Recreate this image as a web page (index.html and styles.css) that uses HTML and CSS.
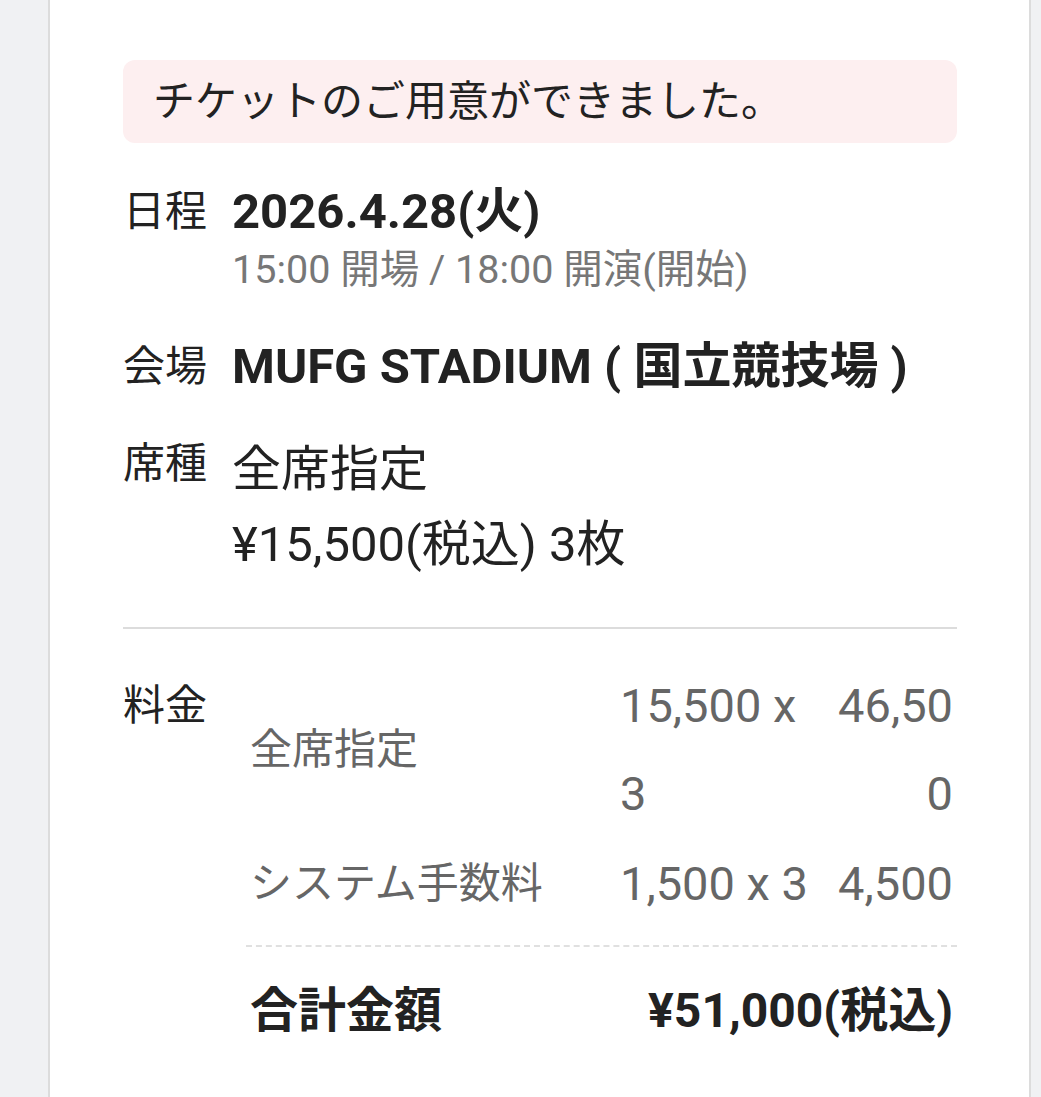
FILE: index.html
```html
<!DOCTYPE html>
<html lang="ja">
<head>
    <meta charset="UTF-8">
    <meta name="viewport" content="width=device-width, initial-scale=1.0">
    <title>チケット</title>
    <link rel="stylesheet" href="styles.css">
</head>
<body>
    <div class="card">
        <!-- お知らせ -->
        <div class="notice">チケットのご用意ができました。</div>

        <!-- 公演情報 -->
        <dl class="info">
            <div class="info-row">
                <dt>日程</dt>
                <dd>
                    <div class="date">2026.4.28(火)</div>
                    <div class="time">15:00 開場 / 18:00 開演(開始)</div>
                </dd>
            </div>
            <div class="info-row">
                <dt>会場</dt>
                <dd class="venue">MUFG STADIUM ( 国立競技場 )</dd>
            </div>
            <div class="info-row seat">
                <dt>席種</dt>
                <dd>
                    <div>全席指定</div>
                    <div>¥15,500(税込) 3枚</div>
                </dd>
            </div>
        </dl>

        <hr class="divider">

        <!-- 料金 -->
        <div class="fee">
            <div class="fee-label">料金</div>
            <div class="fee-table">
                <div class="fee-row">
                    <div class="fee-name">全席指定</div>
                    <div class="fee-qty">15,500 x 3</div>
                    <div class="fee-amount">46,500</div>
                </div>
                <div class="fee-row">
                    <div class="fee-name">システム手数料</div>
                    <div class="fee-qty">1,500 x 3</div>
                    <div class="fee-amount">4,500</div>
                </div>
                <div class="fee-total">
                    <div>合計金額</div>
                    <div>¥51,000(税込)</div>
                </div>
            </div>
        </div>
    </div>
</body>
</html>
```

FILE: styles.css
```css
/* チケット詳細 */
body {
    font-family: Roboto, "Noto Sans CJK JP", sans-serif;
    background-color: #f0f1f3;
    margin: 0;
    padding: 0;
    color: #222;
}

.card {
    background: #ffffff;
    margin: 0 10px 0 48px;
    border-left: 2px solid #dcdcdc;
    border-right: 2px solid #dcdcdc;
    padding: 60px 72px 60px 73px;
    min-height: 100vh;
    box-sizing: border-box;
}

.notice {
    background-color: #fdeff0;
    border-radius: 12px;
    height: 83px;
    line-height: 83px;
    padding: 0 30px;
    font-size: 42px;
}

.info {
    margin: 0;
}

.info-row {
    display: flex;
    margin-top: 39px;
}

.info-row dt {
    width: 109px;
    flex-shrink: 0;
    font-size: 42px;
    line-height: 60px;
}

.info-row dd {
    margin: 0;
    font-size: 49px;
    line-height: 60px;
}

.date,
.venue {
    font-weight: bold;
}

.time {
    color: #777;
    font-size: 39.5px;
    line-height: 56px;
}

.info-row.seat {
    margin-top: 35px;
}

.info-row.seat dt {
    line-height: 64px;
}

.info-row.seat dd {
    line-height: 75px;
}

.divider {
    border: none;
    border-top: 2px solid #dcdcdc;
    margin: 45px 0 0;
}

.fee {
    display: flex;
    margin-top: 33px;
}

.fee-label {
    width: 123px;
    flex-shrink: 0;
    font-size: 42px;
    line-height: 88px;
}

.fee-table {
    flex: 1;
    font-size: 47px;
    line-height: 88px;
    color: #666;
}

.fee-row {
    display: grid;
    grid-template-columns: 370px 206px 1fr;
    align-items: center;
    margin-bottom: 2px;
}

.fee-row > div {
    padding: 0 4px;
}

.fee-name {
    font-size: 42px;
}

.fee-amount {
    text-align: right;
    word-break: break-all;
}

.fee-total {
    display: flex;
    justify-content: space-between;
    border-top: 2px dashed #e0e0e0;
    margin-top: 17px;
    padding: 20px 4px 0;
    color: #222;
    font-weight: bold;
    font-size: 48px;
}
```
